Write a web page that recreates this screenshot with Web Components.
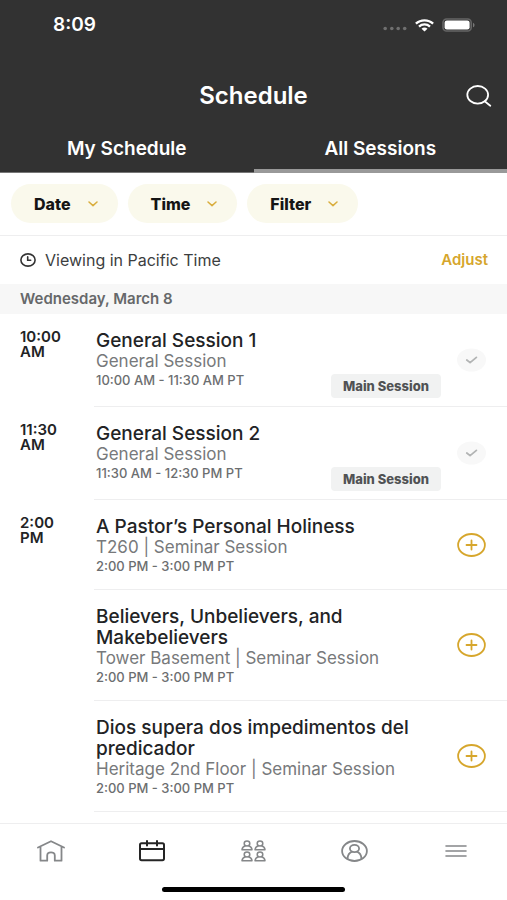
<!DOCTYPE html>
<html lang="en">
<head>
<meta charset="utf-8">
<meta name="viewport" content="width=device-width, initial-scale=1">
<title>Schedule</title>
<style>
  html { --ink: #222325; --muted: #77797b; --gold: #d6a62c; --bar: #323232; --line: #eeeeef; }
  body { margin: 0; background: #fff; color: var(--ink); font-family: Inter, "Liberation Sans", sans-serif; }
</style>
</head>
<body>
<schedule-app>
  <status-bar slot="top">8:09</status-bar>
  <app-header slot="top">Schedule</app-header>
  <tab-strip slot="top">
    <tab-item>My Schedule</tab-item>
    <tab-item selected>All Sessions</tab-item>
  </tab-strip>
  <filter-bar>
    <filter-pill>Date</filter-pill>
    <filter-pill>Time</filter-pill>
    <filter-pill>Filter</filter-pill>
  </filter-bar>
  <zone-bar>Viewing in Pacific Time</zone-bar>
  <day-heading>Wednesday, March 8</day-heading>
  <session-row added tagged>
    <span slot="start">10:00 AM</span><span slot="title">General Session 1</span>
    <span slot="place">General Session</span><span slot="time">10:00 AM - 11:30 AM PT</span>
    <span slot="tag">Main Session</span>
  </session-row>
  <session-row added tagged>
    <span slot="start">11:30 AM</span><span slot="title">General Session 2</span>
    <span slot="place">General Session</span><span slot="time">11:30 AM - 12:30 PM PT</span>
    <span slot="tag">Main Session</span>
  </session-row>
  <session-row>
    <span slot="start">2:00 PM</span><span slot="title">A Pastor’s Personal Holiness</span>
    <span slot="place">T260 | Seminar Session</span><span slot="time">2:00 PM - 3:00 PM PT</span>
  </session-row>
  <session-row>
    <span slot="title">Believers, Unbelievers, and Makebelievers</span>
    <span slot="place">Tower Basement | Seminar Session</span><span slot="time">2:00 PM - 3:00 PM PT</span>
  </session-row>
  <session-row>
    <span slot="title">Dios supera dos impedimentos del predicador</span>
    <span slot="place">Heritage 2nd Floor | Seminar Session</span><span slot="time">2:00 PM - 3:00 PM PT</span>
  </session-row>
  <nav-bar slot="bottom"></nav-bar>
</schedule-app>
<script>
const define = (name, html, setup) => {
  const template = document.createElement('template');
  template.innerHTML = '<style>:host,*{box-sizing:border-box}button{font:inherit;color:inherit;border:0;background:none;padding:0;margin:0;cursor:pointer}svg{display:block}</style>' + html;
  customElements.define(name, class extends HTMLElement {
    constructor() {
      super();
      this.attachShadow({ mode: 'open' }).append(template.content.cloneNode(true));
    }
    connectedCallback() { if (setup) setup(this, this.shadowRoot); }
  });
};

define('schedule-app', `
<style>
  :host { display: flex; flex-direction: column; height: 100vh; }
  header { background: var(--bar); color: #fff; flex: none; }
  main { flex: 1; min-height: 0; overflow: hidden auto; scrollbar-width: none; }
</style>
<header><slot name="top"></slot></header>
<main><slot></slot></main>
<slot name="bottom"></slot>`);

define('status-bar', `
<style>
  :host { display: flex; align-items: center; justify-content: space-between; height: 50px; padding: 0 32px 0 53px; font-size: 19px; line-height: 24px; font-weight: 600; }
  div { display: flex; align-items: center; gap: 8px; }
</style>
<span><slot></slot></span>
<div aria-hidden="true">
  <svg width="24" height="14" viewBox="0 0 24 14" fill="#6f6f6f"><circle cx="2.2" cy="10.500" r="1.8"/><circle cx="8.8" cy="10.500" r="1.8"/><circle cx="15.2" cy="10.500" r="1.8"/><circle cx="21.7" cy="10.500" r="1.8"/></svg>
  <svg width="19" height="13" viewBox="0 0 19 13" fill="none" stroke="#fff" stroke-width="2.3"><path d="M.9 4.7C5.6.2 13.4.2 18.1 4.7M4 7.6c3.1-2.9 7.9-2.9 11 0"/><path d="M6.500 9.700c1.700-1.500 4.300-1.500 6 0l-3 2.800z" fill="#fff" stroke="none"/></svg>
  <svg width="33" height="14" viewBox="0 0 33 14"><rect x="1" y="1" width="28.200" height="12" rx="3.600" fill="none" stroke="#666" stroke-width="1.600"/><rect x="2.600" y="2.400" width="25" height="9.200" rx="2.300" fill="#fff"/><path d="M31 4.700c2 .8 2 3.800 0 4.600z" fill="#777"/></svg>
</div>`);

define('app-header', `
<style>
  :host { display: grid; grid-template-columns: 1fr auto 1fr; align-items: center; height: 91px; padding: 0 15px; }
  h1 { grid-column: 2; margin: 0; font-size: 24px; line-height: 28px; font-weight: 600; }
  button { justify-self: end; }
</style>
<h1><slot></slot></h1>
<button aria-label="Search"><svg width="26" height="22" viewBox="0 0 26 22" fill="none" stroke="#fff" stroke-width="1.800" stroke-linecap="round"><ellipse cx="11.700" cy="9.800" rx="10.400" ry="8.800"/><path d="M18.700 16.300l5.600 4.400"/></svg></button>`);

define('tab-strip', `
<style>:host { display: grid; grid-template-columns: 1fr 1fr; }</style><slot></slot>`,
  host => host.setAttribute('role', 'tablist'));

define('tab-item', `
<style>
  :host { display: block; }
  button { display: block; width: 100%; padding-bottom: 15px; border-bottom: 1px solid #777; font-size: 19px; line-height: 16px; font-weight: 600; }
  :host([selected]) button { padding-bottom: 12px; border-bottom: 4px solid #999; }
</style>
<button role="tab"><slot></slot></button>`,
  (host, root) => root.querySelector('button').setAttribute('aria-selected', host.hasAttribute('selected')));

define('filter-bar', `
<style>:host { display: flex; gap: 10px; padding: 11px; height: 63px; border-bottom: 1px solid var(--line); }</style><slot></slot>`);

define('filter-pill', `
<style>
  button { display: flex; align-items: center; gap: 17px; height: 39px; padding: 0 20px 0 23px; border-radius: 20px; background: #faf9ec; color: #151515; font-size: 16px; line-height: 18px; font-weight: 800; }
</style>
<button aria-haspopup="listbox"><slot></slot><svg width="10" height="6" viewBox="0 0 10 6" fill="none" stroke="#d9ad3c" stroke-width="1.500" stroke-linecap="round" stroke-linejoin="round"><path d="M1 1l4 3.600L9 1"/></svg></button>`);

define('zone-bar', `
<style>
  :host { display: flex; align-items: center; gap: 9px; height: 48px; padding: 0 19px 0 20px; font-size: 16px; line-height: 20px; color: #3c3e40; }
  span { flex: 1; }
  a { color: var(--gold); font-weight: 600; font-size: 15px; text-decoration: none; }
</style>
<svg width="16" height="14" viewBox="0 0 16 14" fill="none" stroke="#333" stroke-width="1.600" stroke-linecap="round"><ellipse cx="8" cy="7" rx="7.100" ry="6.100"/><path d="M7.700 3.900v3.400h3"/></svg>
<span><slot></slot></span>
<a href="#adjust">Adjust</a>`);

define('day-heading', `
<style>
  :host { display: block; background: #f7f7f7; color: #66686a; }
  h2 { margin: 0; padding: 5px 20px; font-size: 15px; line-height: 20px; font-weight: 600; }
</style>
<h2><slot></slot></h2>`);

define('session-row', `
<style>
  :host { display: flex; padding-left: 20px; }
  .start { flex: none; width: 74px; padding: 15px 20px 0 0; font-size: 15px; line-height: 15px; font-weight: 600; }
  article { flex: 1; display: flex; align-items: center; padding: 0 21px 0 2px; border-bottom: 1px solid var(--line); }
  .text { flex: 1; padding: 16px 0 13px; }
  :host([tagged]) .text { padding-bottom: 16px; }
  h3 { margin: 0; font-size: 19px; line-height: 21px; font-weight: 500; }
  p { margin: 0; color: var(--muted); font-size: 17px; line-height: 20px; }
  p.time { font-size: 13px; line-height: 19px; font-weight: 500; color: #6c6e70; }
  .tag { display: none; align-self: flex-end; margin-bottom: 8px; padding: 0 12px; border-radius: 4px; background: #f1f2f2; color: #505254; font-size: 13px; line-height: 24px; font-weight: 800; }
  :host([tagged]) .tag { display: block; }
  button { flex: none; margin-left: 16px; }
  .done { display: none; }
  :host([added]) .done { display: block; }
  :host([added]) .add { display: none; }
</style>
<div class="start"><slot name="start"></slot></div>
<article>
  <div class="text">
    <h3><slot name="title"></slot></h3>
    <p><slot name="place"></slot></p>
    <p class="time"><slot name="time"></slot></p>
  </div>
  <div class="tag"><slot name="tag"></slot></div>
  <button>
    <svg class="add" width="29" height="24" viewBox="0 0 29 24" fill="none" stroke="#d6a62c" stroke-width="1.800" stroke-linecap="round"><ellipse cx="14.500" cy="12" rx="13.400" ry="11"/><path d="M9.500 12h10M14.500 7.500v9"/></svg>
    <svg class="done" width="29" height="24" viewBox="0 0 29 24" fill="none"><ellipse cx="14.500" cy="12" rx="14.500" ry="11.500" fill="#f8f8f8"/><path d="M9.800 12l3.300 2.600 6.300-5.200" stroke="#b2b4b4" stroke-width="1.800" stroke-linecap="round" stroke-linejoin="round"/></svg>
  </button>
</article>`,
  (host, root) => root.querySelector('button').setAttribute('aria-label', host.hasAttribute('added') ? 'In my schedule' : 'Add to my schedule'));

define('nav-bar', `
<style>
  :host { display: flex; flex-direction: column; flex: none; height: 77px; border-top: 1px solid var(--line); background: #fff; }
  nav { display: grid; grid-template-columns: repeat(5, 1fr); height: 54px; }
  a { display: grid; place-items: center; color: #858789; }
  a[aria-current] { color: #252525; }
  svg { fill: none; stroke: currentColor; stroke-width: 1.800; stroke-linecap: round; stroke-linejoin: round; }
  .indicator { align-self: center; width: 36%; height: 5px; margin-top: 9px; border-radius: 3px; background: #000; }
</style>
<nav aria-label="Main">
  <a href="#home" aria-label="Home"><svg width="28" height="22" viewBox="0 0 28 22"><path d="M1 7.500L14 1.200l13 6.300M3.500 6.500v14.200h6.700v-5.200c0-4.300 7.600-4.300 7.600 0v5.200h6.700V6.500"/></svg></a>
  <a href="#schedule" aria-label="Schedule" aria-current="page"><svg width="26" height="22" viewBox="0 0 26 22" style="stroke-width:2"><rect x="1" y="3.200" width="24" height="17" rx="1.600"/><path d="M1 9h24M8 1v4.500M18 1v4.500"/></svg></a>
  <a href="#people" aria-label="People"><svg width="25" height="22" viewBox="0 0 25 22" style="stroke-width:1.500"><defs><g id="p"><ellipse cx="6" cy="3.500" rx="2.800" ry="2.500"/><path d="M4.400 5.800C2.300 6.500 1.200 7.600 1 9.800h10C10.800 7.600 9.700 6.500 7.600 5.800"/></g></defs><use href="#p"/><use href="#p" x="13"/><use href="#p" y="11"/><use href="#p" x="13" y="11"/></svg></a>
  <a href="#profile" aria-label="Profile"><svg width="27" height="22" viewBox="0 0 27 22"><ellipse cx="13.500" cy="11" rx="12.400" ry="10"/><ellipse cx="13.500" cy="8.500" rx="4.600" ry="3.700"/><path d="M6.500 18.800c.3-4 1.800-6.100 4.500-7.100M20.500 18.800c-.3-4-1.800-6.100-4.500-7.100"/></svg></a>
  <a href="#more" aria-label="More"><svg width="22" height="14" viewBox="0 0 22 14" style="stroke-width:1.600"><path d="M1 2h20M1 7h20M1 12h20"/></svg></a>
</nav>
<div class="indicator"></div>`);
</script>
</body>
</html>
